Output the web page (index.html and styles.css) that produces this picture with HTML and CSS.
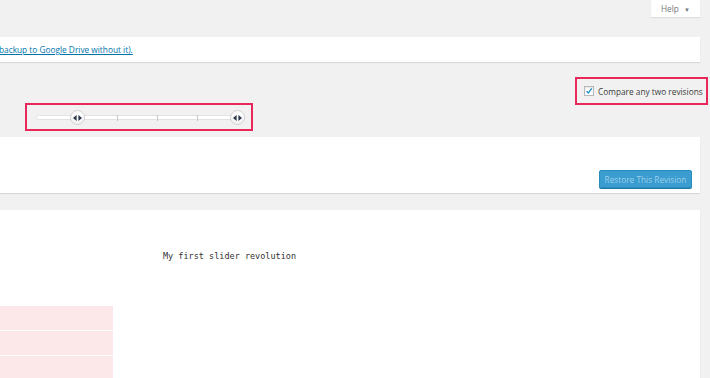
FILE: index.html
```html
<!DOCTYPE html>
<html lang="en">
<head>
	<meta charset="UTF-8">
	<title>Revisions</title>
	<link rel="stylesheet" href="styles.css">
</head>
<body>

	<div class="wrap">
		<div class="screen-meta">
			<button class="help-tab" type="button">Help <span class="caret">&#9660;</span></button>
		</div>

		<div class="notice">
			<a href="#">backup to Google Drive without it).</a>
		</div>

		<div class="rev-controls">
			<div class="compare-row">
				<label class="compare-two mark">
					<span class="check">
						<svg width="10" height="10" viewBox="0 0 10 10"><path d="M2 5.2 L4.2 7.4 L8.4 1.8" fill="none" stroke="#1e8cbe" stroke-width="1.6"/></svg>
					</span>
					Compare any two revisions
				</label>
			</div>
			<div class="slider-box mark">
				<div class="slider">
					<span class="tick" data-pos="1"></span>
					<span class="tick" data-pos="2"></span>
					<span class="tick" data-pos="3"></span>
					<span class="tick" data-pos="4"></span>
					<span class="handle handle-from">
						<svg width="9" height="6" viewBox="0 0 9 6"><path d="M0 3 L3.6 0 V6 Z M9 3 L5.4 0 V6 Z" fill="#2b3a4a"/></svg>
					</span>
					<span class="handle handle-to">
						<svg width="9" height="6" viewBox="0 0 9 6"><path d="M0 3 L3.6 0 V6 Z M9 3 L5.4 0 V6 Z" fill="#2b3a4a"/></svg>
					</span>
				</div>
			</div>
		</div>

		<div class="panel rev-meta">
			<button class="button-primary" type="button" disabled>Restore This Revision</button>
		</div>

		<div class="panel rev-diff">
			<div class="diff-title">My first slider revolution</div>
			<div class="diff-lines">
				<div class="diff-deleted"></div>
				<div class="diff-deleted"></div>
				<div class="diff-deleted"></div>
			</div>
		</div>
	</div>

</body>
</html>
```

FILE: styles.css
```css
html, body { height: 100%; overflow: hidden }
body {
	margin: 0;
	background: #f1f1f1;
	font-family: "Open Sans", "Liberation Sans", sans-serif;
	font-size: 8.3px;
	color: #444;
}
.wrap { padding-right: 10px }

.screen-meta {
	display: flex;
	justify-content: flex-end;
}
.help-tab {
	width: 49px;
	height: 17px;
	padding: 0 0 1px 0;
	border: 0;
	background: #fff;
	box-shadow: 0 1px 1px rgba(0, 0, 0, .08);
	font: inherit;
	color: #72777c;
}
.help-tab .caret { font-size: 6px; margin-left: 3px; color: #72777c }

.notice {
	margin-top: 20px;
	height: 25px;
	display: flex;
	align-items: center;
	background: #fff;
	box-shadow: 0 1px 1px rgba(0, 0, 0, .1);
}
.notice a { color: #0073aa; text-decoration: underline; margin-left: -1px }

.mark { border: 2px solid #e8275a }

.rev-controls { padding-top: 15px }
.compare-row {
	display: flex;
	justify-content: flex-end;
	margin-right: -8px;
}
.compare-two {
	width: 129px;
	height: 24px;
	display: flex;
	align-items: center;
	color: #3c3c3c;
	white-space: nowrap;
}
.check {
	width: 10px;
	height: 10px;
	margin: 0 4px 0 7px;
	display: flex;
	align-items: center;
	justify-content: center;
	box-sizing: border-box;
	border: 1px solid #b4b9be;
	background: #fff;
	box-shadow: inset 0 1px 2px rgba(0, 0, 0, .1);
}

.slider-box {
	width: 224px;
	height: 24px;
	margin: -2px 0 0 25px;
	display: flex;
	align-items: center;
}
.slider {
	position: relative;
	width: 204px;
	height: 5px;
	margin: 1px 0 0 9px;
	box-sizing: border-box;
	border: 1px solid #e2e2e2;
	background: #fff;
	border-radius: 3px;
}
.tick {
	position: absolute;
	top: -1px;
	width: 1px;
	height: 6px;
	background: #c8c8c8;
}
.tick[data-pos="1"] { left: 40px }
.tick[data-pos="2"] { left: 80px }
.tick[data-pos="3"] { left: 120px }
.tick[data-pos="4"] { left: 160px }
.handle {
	position: absolute;
	top: -6px;
	width: 15px;
	height: 15px;
	margin-left: -8px;
	box-sizing: border-box;
	border: 1px solid #d0d0d0;
	border-radius: 50%;
	background: linear-gradient(#fff, #f3f3f3);
	display: flex;
	align-items: center;
	justify-content: center;
}
.handle-from { left: 41px }
.handle-to { left: 201px }

.panel {
	background: #fff;
	box-shadow: 0 1px 1px rgba(0, 0, 0, .1);
}
.rev-meta {
	margin-top: 6px;
	height: 56px;
	box-sizing: border-box;
	padding: 0 8px 5px 0;
	display: flex;
	justify-content: flex-end;
	align-items: flex-end;
}
.button-primary {
	width: 93px;
	height: 18px;
	padding: 0;
	border: 1px solid #2a8bbf;
	border-radius: 2px;
	background: #3a9ccf;
	color: #9bd0ec;
	font: inherit;
	box-shadow: 0 1px 0 #1f7aaa;
}

.rev-diff {
	margin-top: 17px;
	height: 168px;
	padding-top: 40px;
	box-sizing: border-box;
}
.diff-title {
	margin-left: 163px;
	font-family: "DejaVu Sans Mono", "Liberation Mono", monospace;
	font-size: 8.5px;
	color: #333;
	line-height: 12px;
}
.diff-lines {
	margin-top: 44px;
	display: flex;
	flex-direction: column;
	gap: 1px;
}
.diff-deleted {
	width: 113px;
	height: 24px;
	background: #fce8e9;
}
```
